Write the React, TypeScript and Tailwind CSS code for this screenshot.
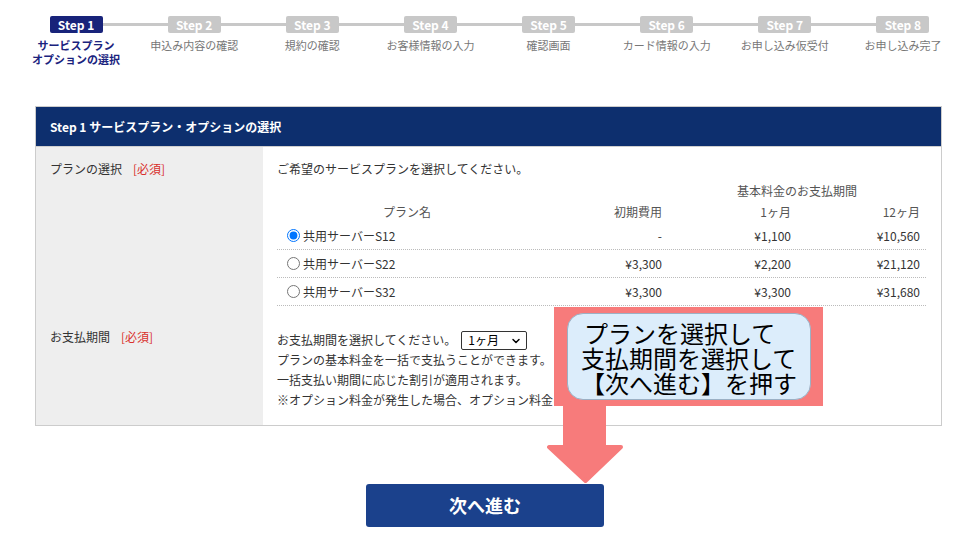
import { ChevronDown } from 'lucide-react';

const steps = [
  { n: 1, label: ['サービスプラン', 'オプションの選択'] },
  { n: 2, label: ['申込み内容の確認'] },
  { n: 3, label: ['規約の確認'] },
  { n: 4, label: ['お客様情報の入力'] },
  { n: 5, label: ['確認画面'] },
  { n: 6, label: ['カード情報の入力'] },
  { n: 7, label: ['お申し込み仮受付'] },
  { n: 8, label: ['お申し込み完了'] },
];

const plans = [
  { name: '共用サーバーS12', initial: '-', month: '¥1,100', year: '¥10,560', checked: true },
  { name: '共用サーバーS22', initial: '¥3,300', month: '¥2,200', year: '¥21,120', checked: false },
  { name: '共用サーバーS32', initial: '¥3,300', month: '¥3,300', year: '¥31,680', checked: false },
];

function StepBar() {
  return (
    <div className="ml-[17px] w-[945px] grid grid-cols-8 pt-4">
      {steps.map((s, i) => {
        const active = i === 0;
        return (
          <div key={s.n} className="flex flex-col items-center">
            <div className="flex items-center w-full h-[17px]">
              <div className={`flex-1 h-[3px] ${i === 0 ? '' : 'bg-[#c8c8c8]'}`} />
              <div
                className={`w-[53px] h-[17px] flex items-center justify-center rounded-[2px] text-white text-[12px] font-bold leading-none ${
                  active ? 'bg-[#18237a]' : 'bg-[#c8c8c8]'
                }`}
              >
                Step {s.n}
              </div>
              <div className={`flex-1 h-[3px] ${i === steps.length - 1 ? '' : 'bg-[#c8c8c8]'}`} />
            </div>
            <div
              className={`mt-[5px] text-[11px] leading-[14px] text-center whitespace-nowrap ${
                active ? 'text-[#1a237e] font-bold' : 'text-[#777777]'
              }`}
            >
              {s.label.map((l) => (
                <div key={l}>{l}</div>
              ))}
            </div>
          </div>
        );
      })}
    </div>
  );
}

function Required() {
  return <span className="ml-[11px] text-[#d9302c]">[必須]</span>;
}

export default function App() {
  return (
    <div
      className="relative w-[965px] h-[546px] overflow-hidden bg-white text-[#333333]"
      style={{ fontFamily: '"Noto Sans CJK JP", "Noto Sans", sans-serif' }}
    >
      <StepBar />

      <div className="mt-[40px] ml-[35px] w-[907px] border border-[#cccccc]">
        <div className="h-[40px] bg-[#0d2f6e] flex items-center px-[14px] text-white text-[12px] font-bold border-b border-[#cfcfcf]">
          Step 1 サービスプラン・オプションの選択
        </div>

        {/* plan row */}
        <div className="flex text-[12px]">
          <div className="w-[227px] bg-[#eeeeee] px-[14px] pt-[13px] leading-[18px]">
            プランの選択
            <Required />
          </div>
          <div className="flex-1 pl-[14px] pr-[15px] pt-[13px] pb-[13px]">
            <p className="leading-[18px]">ご希望のサービスプランを選択してください。</p>
            <div className="mt-[2px] grid grid-cols-[260px_131px_129px_129px] text-[#555555]">
              <div className="col-start-3 col-span-2 h-[21px] flex items-center justify-center">
                基本料金のお支払期間
              </div>
              <div className="h-[21px] flex items-center justify-center">プラン名</div>
              <div className="h-[21px] flex items-center justify-end pr-[6px]">初期費用</div>
              <div className="h-[21px] flex items-center justify-end pr-[6px]">1ヶ月</div>
              <div className="h-[21px] flex items-center justify-end pr-[6px]">12ヶ月</div>
            </div>
            <div>
              {plans.map((p) => (
                <div
                  key={p.name}
                  className="grid grid-cols-[260px_131px_129px_129px] h-[28px] border-b border-dotted border-[#bbbbbb] text-[#333333]"
                >
                  <label className="flex items-center pl-[10px]">
                    <input
                      type="radio"
                      name="plan"
                      defaultChecked={p.checked}
                      className="m-0 mr-[3px] w-[13px] h-[13px] accent-[#0075ff]"
                    />
                    {p.name}
                  </label>
                  <div className="flex items-center justify-end pr-[6px]">{p.initial}</div>
                  <div className="flex items-center justify-end pr-[6px]">{p.month}</div>
                  <div className="flex items-center justify-end pr-[6px]">{p.year}</div>
                </div>
              ))}
            </div>
          </div>
        </div>

        {/* payment period row */}
        <div className="flex text-[12px]">
          <div className="w-[227px] bg-[#eeeeee] px-[14px] pt-[9px] leading-[18px]">
            お支払期間
            <Required />
          </div>
          <div className="flex-1 pl-[14px] pr-[15px] pt-[11px] pb-[15px] leading-[20px]">
            <div className="flex items-center h-[20px]">
              お支払期間を選択してください。
              <div className="relative ml-[5px] w-[66px] h-[19px] border border-[#333333] rounded-[2px] bg-white flex items-center pl-[6px] text-[12px] text-black">
                1ヶ月
                <ChevronDown className="absolute right-[4px] top-[3px] w-[12px] h-[12px]" strokeWidth={3} />
              </div>
            </div>
            <p>プランの基本料金を一括で支払うことができます。</p>
            <p>一括支払い期間に応じた割引が適用されます。</p>
            <p>※オプション料金が発生した場合、オプション料金は別途ご請求となります。</p>
          </div>
        </div>
      </div>

      <div className="mt-[58px] flex justify-center pl-[5px]">
        <button className="w-[238px] h-[43px] bg-[#1b418c] rounded-[3px] text-white text-[18px] font-bold">
          次へ進む
        </button>
      </div>

      {/* callout overlay */}
      <div className="absolute left-[554px] top-[307px] w-[269px] h-[99px] bg-[#f77b7b]">
        <div className="absolute left-[13px] top-[6px] w-[244px] h-[87px] rounded-[16px] bg-[#dcedfb] border border-[#9bb0c4] pt-[6px] pl-[13px] text-[24px] leading-[25px] text-black whitespace-nowrap">
          <div className="pl-[3px]">プランを選択して</div>
          <div>支払期間を選択して</div>
          <div>【次へ進む】を押す</div>
        </div>
      </div>
      <svg className="absolute left-[546px] top-[405px]" width="78" height="80" viewBox="0 0 78 80">
        <polygon
          points="19,0 58,0 58,42 75,42 39.5,76 3,42 19,42"
          fill="#f77b7b"
          stroke="#f77b7b"
          strokeWidth="4"
          strokeLinejoin="round"
        />
      </svg>
    </div>
  );
}
